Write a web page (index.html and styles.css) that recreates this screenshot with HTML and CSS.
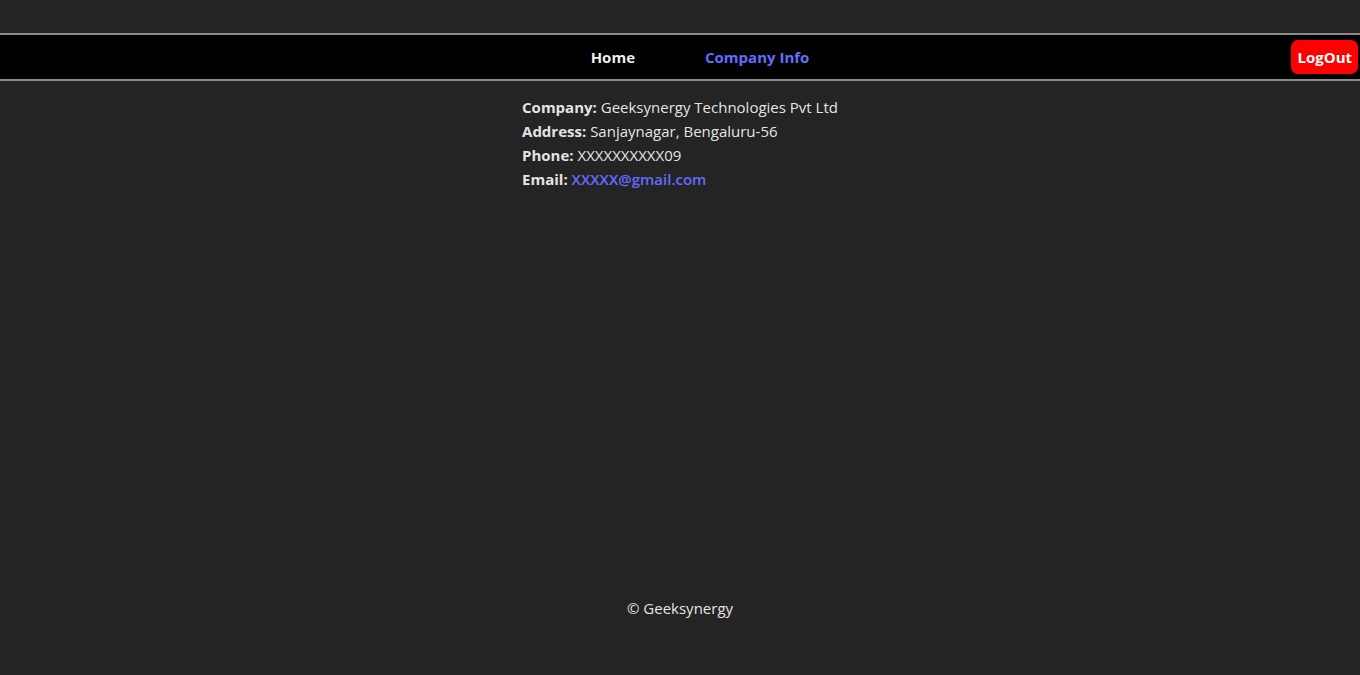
FILE: index.html
```html
<!DOCTYPE html>
<html>
<head>
<meta charset="utf-8">
<link rel="stylesheet" href="styles.css">
</head>
<body>
<div class="page">
  <nav class="navbar">
    <div class="nav-links">
      <a class="nav-link" href="#">Home</a>
      <a class="nav-link active" href="#">Company Info</a>
    </div>
    <button class="logout">LogOut</button>
  </nav>
  <main class="info">
    <div class="info-block">
      <p><b>Company:</b> Geeksynergy Technologies Pvt Ltd</p>
      <p><b>Address:</b> Sanjaynagar, Bengaluru-56</p>
      <p><b>Phone:</b> XXXXXXXXXX09</p>
      <p><b>Email:</b> <a class="mail" href="#">XXXXX@gmail.com</a></p>
    </div>
  </main>
  <footer class="footer">© Geeksynergy</footer>
</div>
</body>
</html>
```

FILE: styles.css
```css
html, body {
  margin: 0;
  padding: 0;
  background: #242424;
  color: rgba(255, 255, 255, 0.9);
  font-family: "Open Sans", "Noto Sans", sans-serif;
  font-size: 15px;
}
.page {
  height: 675px;
  display: flex;
  flex-direction: column;
  padding-top: 33px;
  box-sizing: border-box;
}
.navbar {
  position: relative;
  height: 44px;
  background: #000;
  border-top: 2px solid #8a8a8a;
  border-bottom: 2px solid #8a8a8a;
  display: flex;
  align-items: center;
  justify-content: center;
}
.nav-links {
  display: flex;
  gap: 70px;
  padding-left: 40px;
}
.nav-link {
  color: rgba(255, 255, 255, 0.94);
  font-weight: 700;
  text-decoration: none;
}
.nav-link.active {
  color: #646cff;
}
.logout {
  position: absolute;
  right: 2px;
  top: 5px;
  height: 34px;
  padding: 0 6px;
  background: #ff0000;
  color: #fff;
  border: none;
  border-radius: 7px;
  font-family: inherit;
  font-size: 15px;
  font-weight: 700;
}
.info {
  display: flex;
  justify-content: center;
  padding-top: 14px;
  flex: 1;
}
.info-block p {
  margin: 0;
  line-height: 24px;
}
.info-block b {
  font-weight: 700;
}
.mail {
  color: #646cff;
  font-weight: 600;
  text-decoration: none;
}
.footer {
  text-align: center;
  line-height: 24px;
  padding-bottom: 55px;
}
```
